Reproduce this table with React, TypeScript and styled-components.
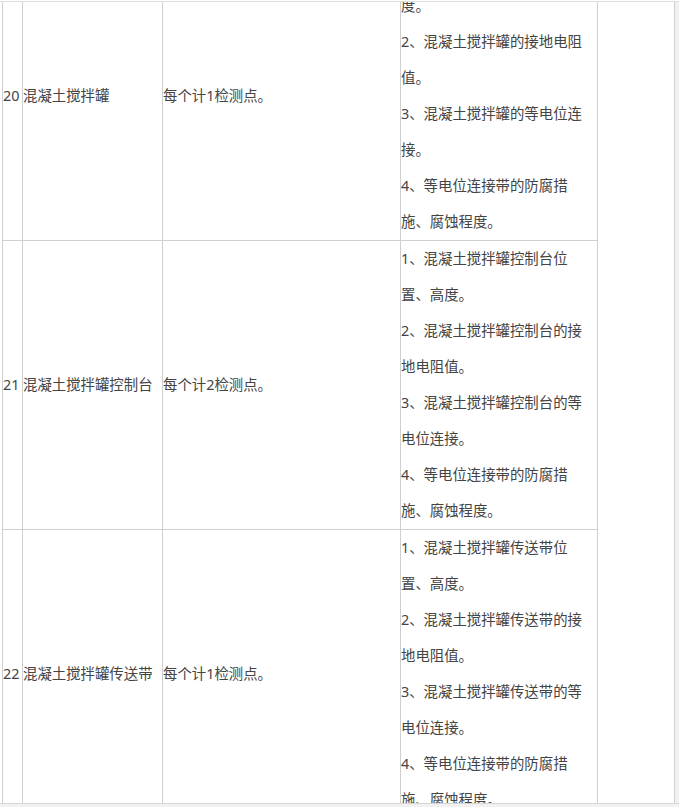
import React from "react";
import styled, { createGlobalStyle } from "styled-components";

const GlobalStyle = createGlobalStyle`
  html, body { margin: 0; padding: 0; background: #ffffff; }
  body { font-family: "Noto Sans", "Noto Sans CJK SC", sans-serif; }
`;

const Screen = styled.div`
  width: 679px;
  height: 807px;
  overflow: hidden;
  background: #ffffff;
  padding-top: 1px;
  box-sizing: border-box;
  display: flex;
  flex-direction: column;
`;

const Frame = styled.div`
  display: flex;
  height: 801px;
  border-top: 1px solid #dedede;
  border-bottom: 1px solid #d6d6d6;
  flex: none;
`;

const Clip = styled.div`
  width: 675px;
  height: 801px;
  overflow: hidden;
  background: #ffffff;
`;

const Gutter = styled.div`
  width: 4px;
  background: #f1f1f1;
`;

const BottomBar = styled.div`
  flex: 1;
  background: #f1f1f1;
`;

const Grid = styled.div`
  margin-top: -51px;
  margin-left: 2px;
  display: grid;
  grid-template-columns: 20px 140px 238px 197px 77px;
  grid-auto-rows: 289px;
  border-left: 1px solid #cfcfcf;
  border-top: 1px solid #cfcfcf;
  width: max-content;
  color: #444444;
  font-size: 14.4px;
`;

const Cell = styled.div<{ $row: number; $col: number }>`
  box-sizing: border-box;
  grid-row: ${(p) => p.$row};
  grid-column: ${(p) => p.$col};
  border-right: 1px solid #cfcfcf;
  border-bottom: 1px solid #cfcfcf;
  display: flex;
  align-items: center;
  line-height: 24px;
  white-space: nowrap;
  overflow: hidden;
`;

const ItemCell = styled.div<{ $row: number }>`
  box-sizing: border-box;
  grid-row: ${(p) => p.$row};
  grid-column: 4;
  border-right: 1px solid #cfcfcf;
  border-bottom: 1px solid #cfcfcf;
  padding-right: 6px;
`;

const Para = styled.p`
  margin: 0;
  line-height: 36px;
`;

const SideCell = styled.div`
  box-sizing: border-box;
  grid-row: 1 / span 3;
  grid-column: 5;
  border-right: 1px solid #cfcfcf;
  border-bottom: 1px solid #cfcfcf;
`;

type Row = { no: string; name: string; rule: string; items: string[] };

const rows: Row[] = [
  {
    no: "20",
    name: "混凝土搅拌罐",
    rule: "每个计1检测点。",
    items: [
      "1、混凝土搅拌罐位置、高度。",
      "2、混凝土搅拌罐的接地电阻值。",
      "3、混凝土搅拌罐的等电位连接。",
      "4、等电位连接带的防腐措施、腐蚀程度。",
    ],
  },
  {
    no: "21",
    name: "混凝土搅拌罐控制台",
    rule: "每个计2检测点。",
    items: [
      "1、混凝土搅拌罐控制台位置、高度。",
      "2、混凝土搅拌罐控制台的接地电阻值。",
      "3、混凝土搅拌罐控制台的等电位连接。",
      "4、等电位连接带的防腐措施、腐蚀程度。",
    ],
  },
  {
    no: "22",
    name: "混凝土搅拌罐传送带",
    rule: "每个计1检测点。",
    items: [
      "1、混凝土搅拌罐传送带位置、高度。",
      "2、混凝土搅拌罐传送带的接地电阻值。",
      "3、混凝土搅拌罐传送带的等电位连接。",
      "4、等电位连接带的防腐措施、腐蚀程度。",
    ],
  },
];

export default function App() {
  return (
    <>
      <GlobalStyle />
      <Screen>
        <Frame>
          <Clip>
            <Grid>
              {rows.map((r, i) => (
                <React.Fragment key={r.no}>
                  <Cell $row={i + 1} $col={1}>{r.no}</Cell>
                  <Cell $row={i + 1} $col={2}>{r.name}</Cell>
                  <Cell $row={i + 1} $col={3}>{r.rule}</Cell>
                  <ItemCell $row={i + 1}>
                    {r.items.map((t) => (
                      <Para key={t}>{t}</Para>
                    ))}
                  </ItemCell>
                </React.Fragment>
              ))}
              <SideCell />
            </Grid>
          </Clip>
          <Gutter />
        </Frame>
        <BottomBar />
      </Screen>
    </>
  );
}
